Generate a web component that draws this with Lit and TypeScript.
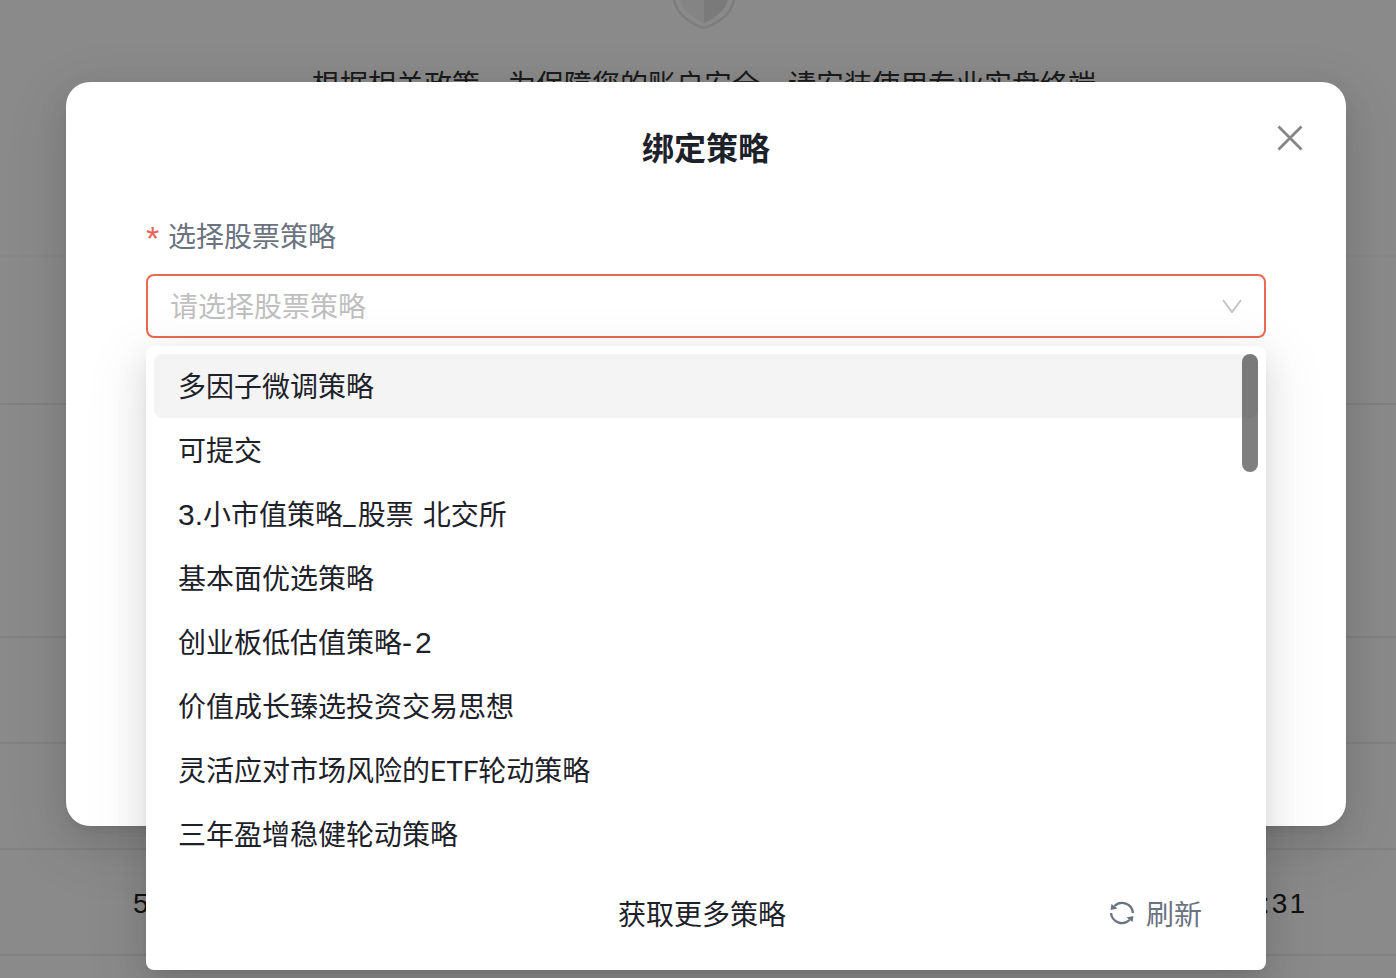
import { LitElement, html, css, svg } from "lit";
import { customElement } from "lit/decorators.js";

const items = [
  html`多因子微调策略`,
  html`可提交`,
  html`<span class="l1">3.</span>小市值策略<span class="l2">_</span>股票<span class="l2"> </span>北交所`,
  html`基本面优选策略`,
  html`创业板低估值策略<span class="l3">-2</span>`,
  html`价值成长臻选投资交易思想`,
  html`灵活应对市场风险的ETF轮动策略`,
  html`三年盈增稳健轮动策略`,
];

@customElement("app-root")
export class AppRoot extends LitElement {
  static styles = css`
    :host {
      display: block;
      position: relative;
      width: 1396px;
      height: 978px;
      overflow: hidden;
      background: #fff;
      font-family: "Liberation Sans", "Noto Sans CJK SC", sans-serif;
      color: #1d2129;
    }
    .page { height: 978px; display: flex; flex-direction: column; align-items: stretch; }
    .top { padding-left: 12px; flex: none; }
    .shield { display: block; width: 64px; height: 30px; margin: 0 auto; }
    .notice { margin-top: 36px; height: 36px; line-height: 40px; font-size: 28px; text-align: center; color: #333; white-space: nowrap; }
    .row { flex: none; border-bottom: 2px solid #eee; box-sizing: border-box; }
    .r1 { height: 155px; border-bottom-color: #fafafa; }
    .r2 { height: 148px; }
    .r3 { height: 233px; }
    .r4 { height: 106px; }
    .r5 { height: 106px; }
    .r6 { height: 106px; display: flex; justify-content: space-between; align-items: center; padding: 4px 89px 0 133px; font-size: 28px; letter-spacing: 2px; color: #222; }
    .mask { position: absolute; inset: 0; background: rgba(0,0,0,.46); }
    .dialog {
      position: absolute; left: 66px; top: 82px; width: 1280px; height: 744px; box-sizing: border-box;
      background: #fff; border-radius: 24px;
      box-shadow: 0 12px 32px rgba(0,0,0,.1), 0 6px 12px -8px rgba(0,0,0,.12), 0 18px 56px 16px rgba(0,0,0,.06);
      padding: 44px 80px 0;
    }
    .title { font-size: 32px; line-height: 46px; font-weight: 600; text-align: center; color: #1d2129; }
    .close { position: absolute; left: 1210px; top: 42px; width: 28px; height: 28px; display: block; }
    .label { margin-top: 39px; display: flex; align-items: center; height: 48px; font-size: 28px; color: #6b7280; }
    .star { color: #e5645a; width: 22px; font-size: 34px; font-family: "Liberation Sans", sans-serif; line-height: 48px; padding-top: 6px; box-sizing: border-box; }
    .select {
      margin-top: 15px; height: 64px; box-sizing: border-box; border: 2px solid #e86a52; border-radius: 8px;
      display: flex; align-items: center; justify-content: space-between; padding: 4px 22px 0 22px;
      font-size: 28px; line-height: 38px; color: #bfbfbf;
    }
    .chev { width: 20px; height: 14px; display: block; margin-top: -4px; }
    .drop {
      position: absolute; left: 146px; top: 346px; width: 1120px; height: 624px; box-sizing: border-box;
      background: #fff; border-radius: 8px; padding: 8px;
      box-shadow: 0 12px 32px rgba(0,0,0,.1), 0 6px 12px -8px rgba(0,0,0,.12), 0 18px 56px 16px rgba(0,0,0,.06);
    }
    .list { position: relative; height: 512px; overflow: hidden; }
    .item { height: 64px; line-height: 68px; padding-left: 24px; font-size: 28px; color: #1d2129; border-radius: 8px; font-family: Roboto, "Noto Sans CJK SC", sans-serif; }
    .item.on { background: #f4f4f4; }
    .l1 { font-family: "Liberation Sans", sans-serif; font-size: 30px; line-height: 0; }
    .l2 { letter-spacing: 2px; }
    .l3 { font-family: "Liberation Sans", sans-serif; font-size: 30px; line-height: 0; letter-spacing: 3px; }
    .thumb { position: absolute; right: 0; top: 0; width: 16px; height: 118px; border-radius: 8px; background: rgba(0,0,0,.5); }
    .foot { position: relative; height: 96px; display: flex; align-items: center; justify-content: center; padding-right: 8px; padding-bottom: 2px; box-sizing: border-box; font-size: 28px; color: #1d2129; }
    .refresh { position: absolute; left: 954px; top: 0; height: 94px; display: flex; align-items: center; gap: 10px; color: #6b7280; }
    .refresh svg { width: 28px; height: 28px; display: block; }
  `;

  render() {
    return html`
      <div class="page">
        <div class="top">
          <svg class="shield" viewBox="0 0 64 30" fill="none">
            <path d="M8 0C10 9 20 18 32 23V0Z" fill="#f4f4f4"/>
            <path d="M32 0V23C44 18 54 9 56 0Z" fill="#e2e2e2"/>
            <path d="M2 0C4 12 16 23 32 28C48 23 60 12 62 0" stroke="#e8e8e8" stroke-width="2.5"/>
          </svg>
          <div class="notice">根据相关政策&#xFF0C;为保障您的账户安全&#xFF0C;请安装使用专业实盘终端</div>
        </div>
        <div class="row r1"></div>
        <div class="row r2"></div>
        <div class="row r3"></div>
        <div class="row r4"></div>
        <div class="row r5"></div>
        <div class="row r6"><span>5</span><span>:31</span></div>
      </div>
      <div class="mask"></div>
      <div class="dialog">
        <div class="title">绑定策略</div>
        <svg class="close" viewBox="0 0 28 28" fill="none" stroke="#858585" stroke-width="2.8">
          <path d="M2.5 2.5 25.5 25.5M25.5 2.5 2.5 25.5"/>
        </svg>
        <div class="label"><span class="star">*</span>选择股票策略</div>
        <div class="select">
          <span>请选择股票策略</span>
          <svg class="chev" viewBox="0 0 20 14" fill="none" stroke="#c4c4c4" stroke-width="2">
            <path d="M1 1 10 13 19 1"/>
          </svg>
        </div>
      </div>
      <div class="drop">
        <div class="list">
          ${items.map((t, i) => html`<div class="item ${i === 0 ? "on" : ""}">${t}</div>`)}
          <div class="thumb"></div>
        </div>
        <div class="foot">
          <span>获取更多策略</span>
          <div class="refresh">
            <svg viewBox="0 0 28 28" fill="none">
              ${svg`<path d="M6.5 7A11 11 0 0 1 25 14" stroke="#6b7280" stroke-width="2.4"/>
              <path d="M3 14A11 11 0 0 0 21.5 21" stroke="#6b7280" stroke-width="2.4"/>
              <path d="M2.5 11 3.5 5 9.5 9.5Z" fill="#6b7280"/>
              <path d="M25.5 17 24.5 23 18.5 18.5Z" fill="#6b7280"/>`}
            </svg>
            <span>刷新</span>
          </div>
        </div>
      </div>
    `;
  }
}
